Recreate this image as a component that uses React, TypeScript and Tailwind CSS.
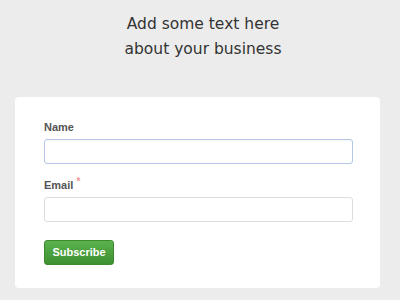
export default function App() {
  return (
    <div className="w-[400px] h-[300px] bg-[#ececec] overflow-hidden flex flex-col">
      <div className="pt-[12px] pl-[6px] text-center text-[15.5px] leading-[25px] text-[#333] font-['DejaVu_Sans',sans-serif]">
        <p>Add some text here</p>
        <p>about your business</p>
      </div>
      <div className="mt-[35px] mx-[15px] w-[365px] h-[191px] bg-white rounded-[4px] pt-[23px] px-[29px] font-['Liberation_Sans',Arial,sans-serif]">
        <label className="block text-[11px] font-bold text-[#555] leading-[14px]">Name</label>
        <input
          type="text"
          className="mt-[5px] block w-[309px] h-[25px] rounded-[3px] border border-[#b3c8e6] bg-white outline-none shadow-[inset_0_1px_1px_rgba(0,0,0,0.04)]"
        />
        <label className="mt-[14px] block text-[11px] font-bold text-[#555] leading-[14px]">
          Email <span className="text-[#e99] align-top text-[10px] relative -top-[3px]">*</span>
        </label>
        <input
          type="text"
          className="mt-[5px] block w-[309px] h-[25px] rounded-[3px] border border-[#ddd] bg-white outline-none"
        />
        <button className="mt-[18px] w-[70px] h-[25px] rounded-[3px] bg-gradient-to-b from-[#5ab24d] to-[#3e8f31] border border-[#3d8a30] text-white text-[11px] font-bold">
          Subscribe
        </button>
      </div>
    </div>
  );
}
